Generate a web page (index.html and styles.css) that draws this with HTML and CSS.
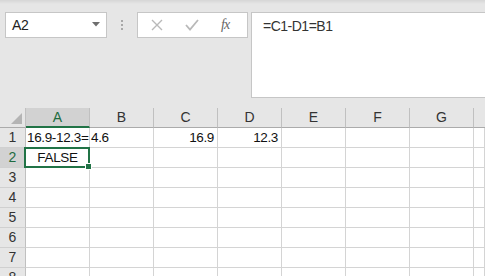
FILE: index.html
```html
<!DOCTYPE html>
<html lang="en">
<head>
    <meta charset="UTF-8">
    <meta name="viewport" content="width=device-width, initial-scale=1.0">
    <title>Sheet</title>
    <link rel="stylesheet" href="styles.css">
</head>
<body>

<div class="toolbar">
    <div class="namebox">
        <span class="name">A2</span>
        <svg class="caret" width="8" height="5" viewBox="0 0 8 5"><path d="M0 0h8L4 4.5z" fill="#6e6e6e"/></svg>
    </div>
    <div class="grip"><i></i><i></i><i></i></div>
    <div class="buttons">
        <svg class="btn" width="12" height="12" viewBox="0 0 12 12"><path d="M1 1l10 10M11 1L1 11" stroke="#b9b9b9" stroke-width="1.4" fill="none"/></svg>
        <svg class="btn" width="14" height="12" viewBox="0 0 14 12"><path d="M1 6l4 4.5L13 1" stroke="#b9b9b9" stroke-width="1.8" fill="none"/></svg>
        <span class="fx">fx</span>
    </div>
    <div class="formula">=C1-D1=B1</div>
</div>

<div class="sheet">
    <div class="corner"></div>
    <div class="col sel">A</div>
    <div class="col">B</div>
    <div class="col">C</div>
    <div class="col">D</div>
    <div class="col">E</div>
    <div class="col">F</div>
    <div class="col">G</div>
    <div class="col last"></div>

    <div class="row">1</div>
    <div class="cell">16.9-12.3=</div>
    <div class="cell">4.6</div>
    <div class="cell num">16.9</div>
    <div class="cell num">12.3</div>
    <div class="cell"></div><div class="cell"></div><div class="cell"></div><div class="cell"></div>

    <div class="row sel">2</div>
    <div class="cell active">FALSE</div>
    <div class="cell"></div><div class="cell"></div><div class="cell"></div><div class="cell"></div><div class="cell"></div><div class="cell"></div><div class="cell"></div>

    <div class="row">3</div>
    <div class="cell"></div><div class="cell"></div><div class="cell"></div><div class="cell"></div><div class="cell"></div><div class="cell"></div><div class="cell"></div><div class="cell"></div>

    <div class="row">4</div>
    <div class="cell"></div><div class="cell"></div><div class="cell"></div><div class="cell"></div><div class="cell"></div><div class="cell"></div><div class="cell"></div><div class="cell"></div>

    <div class="row">5</div>
    <div class="cell"></div><div class="cell"></div><div class="cell"></div><div class="cell"></div><div class="cell"></div><div class="cell"></div><div class="cell"></div><div class="cell"></div>

    <div class="row">6</div>
    <div class="cell"></div><div class="cell"></div><div class="cell"></div><div class="cell"></div><div class="cell"></div><div class="cell"></div><div class="cell"></div><div class="cell"></div>

    <div class="row">7</div>
    <div class="cell"></div><div class="cell"></div><div class="cell"></div><div class="cell"></div><div class="cell"></div><div class="cell"></div><div class="cell"></div><div class="cell"></div>

    <div class="row">8</div>
    <div class="cell"></div><div class="cell"></div><div class="cell"></div><div class="cell"></div><div class="cell"></div><div class="cell"></div><div class="cell"></div><div class="cell"></div>
</div>

</body>
</html>
```

FILE: styles.css
```css
body {
    margin: 0;
    width: 485px;
    height: 276px;
    overflow: hidden;
    font-family: "Liberation Sans", Arial, sans-serif;
    background: linear-gradient(#d6d6d6, #e6e6e6 4px);
    background-color: #e6e6e6;
}
.toolbar {
    display: flex;
    align-items: flex-start;
    height: 108px;
    box-sizing: border-box;
    padding: 12px 0 0 5px;
}
.namebox {
    width: 102px;
    height: 26px;
    box-sizing: border-box;
    border: 1px solid #c6c6c6;
    background-color: #fff;
    display: flex;
    align-items: center;
    justify-content: space-between;
    padding: 0 6px 0 6px;
}
.name {
    font-size: 14px;
    color: #222;
    letter-spacing: -0.3px;
}
.caret {
    margin-top: -2px;
}
.grip {
    width: 30px;
    height: 26px;
    display: flex;
    flex-direction: column;
    align-items: center;
    justify-content: center;
    gap: 2px;
}
.grip i {
    width: 2px;
    height: 2px;
    background-color: #a8a8a8;
}
.buttons {
    width: 111px;
    height: 26px;
    box-sizing: border-box;
    border: 1px solid #c6c6c6;
    background-color: #fff;
    display: flex;
    align-items: center;
    padding-left: 13px;
}
.btn {
    margin-right: 22px;
}
.btn + .btn {
    margin-right: 22px;
}
.fx {
    font-family: "Liberation Serif", serif;
    font-style: italic;
    font-size: 14px;
    color: #666;
    letter-spacing: -1px;
}
.formula {
    margin-left: 3px;
    flex: 1;
    height: 86px;
    box-sizing: border-box;
    border: 1px solid #c6c6c6;
    border-right: none;
    background-color: #fff;
    padding: 5px 0 0 11px;
    font-size: 14px;
    letter-spacing: -0.5px;
    color: #333;
}
.sheet {
    display: grid;
    grid-template-columns: 26px repeat(7, 64px) 1fr;
    grid-template-rows: 20px;
    grid-auto-rows: 20px;
    font-size: 14px;
}
.corner, .col, .row, .cell {
    box-sizing: border-box;
    border-right: 1px solid #d4d4d4;
    border-bottom: 1px solid #d4d4d4;
    line-height: 19px;
    white-space: nowrap;
}
.corner {
    position: relative;
    background-color: #e6e6e6;
    border-right-color: #c0c0c0;
    border-bottom-color: #ababab;
}
.corner::after {
    content: "";
    position: absolute;
    right: 3px;
    bottom: 3px;
    border-left: 11px solid transparent;
    border-bottom: 11px solid #b4b4b4;
}
.col {
    background-color: #e6e6e6;
    border-right-color: #c0c0c0;
    border-bottom-color: #ababab;
    text-align: center;
    color: #333;
}
.col.last {
    border-right: none;
}
.col.sel {
    background-color: #d2d2d2;
    color: #1e6b40;
    border-bottom: 2px solid #217346;
    line-height: 18px;
}
.row {
    background-color: #e6e6e6;
    border-right-color: #c0c0c0;
    border-bottom-color: #d0d0d0;
    text-align: center;
    color: #333;
}
.row.sel {
    background-color: #d2d2d2;
    color: #1e6b40;
}
.cell {
    background-color: #fff;
    color: #111;
    font-size: 13.5px;
    padding: 0 3px 0 1px;
    letter-spacing: -0.35px;
}
.cell.num {
    text-align: right;
}
.cell.active {
    position: relative;
    text-align: center;
    padding: 0;
}
.cell.active::before {
    content: "";
    position: absolute;
    left: -2px;
    top: -1px;
    width: 66px;
    height: 21px;
    border: 2px solid #217346;
    box-sizing: border-box;
}
.cell.active::after {
    content: "";
    position: absolute;
    right: -3px;
    bottom: -3px;
    width: 5px;
    height: 5px;
    background-color: #217346;
    border: 1px solid #fff;
}
```
